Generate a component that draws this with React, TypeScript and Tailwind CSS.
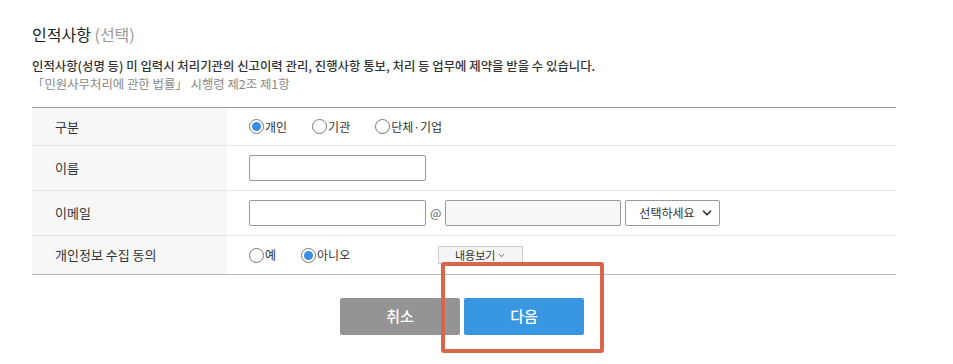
import { ChevronDown } from "lucide-react";

const font = { fontFamily: '"Noto Sans CJK KR", "Noto Sans", sans-serif' };

function Radio({ label, checked }: { label: string; checked?: boolean }) {
  return (
    <label className="flex items-center gap-[1px] text-[12px] text-[#333]">
      <span className="flex h-[15px] w-[15px] items-center justify-center rounded-full border border-[#777] bg-white">
        {checked && <span className="h-[9px] w-[9px] rounded-full bg-[#3a8ee6]" />}
      </span>
      {label}
    </label>
  );
}

function Row({ label, children, last }: { label: string; children: React.ReactNode; last?: boolean }) {
  return (
    <div className={`flex ${last ? "" : "border-b border-[#e5e5e5]"}`}>
      <div className="flex w-[195px] items-center bg-[#f7f7f7] pl-[23px] text-[13px] text-[#333]">{label}</div>
      <div className="flex flex-1 items-center pl-[22px]">{children}</div>
    </div>
  );
}

export default function App() {
  return (
    <div className="relative h-[364px] w-[953px] bg-white" style={font}>
      <div className="px-[32px] pt-[22px]">
        <h2 className="text-[16px] leading-[24px] text-[#222]">
          인적사항 <span className="text-[#999]">(선택)</span>
        </h2>
        <p className="mt-[11px] text-[12.4px] font-medium leading-[18px] text-[#333]">
          인적사항(성명 등) 미 입력시 처리기관의 신고이력 관리, 진행사항 통보, 처리 등 업무에 제약을 받을 수 있습니다.
        </p>
        <p className="text-[12.4px] leading-[18px] text-[#888]">
          「민원사무처리에 관한 법률」 시행령 제2조 제1항
        </p>

        <div className="mt-[14px] w-[864px] border-y border-t-[#999] border-b-[#bbb]">
          <Row label="구분">
            <div className="flex h-[37px] items-center gap-[25px]">
              <Radio label="개인" checked />
              <Radio label="기관" />
              <Radio label="단체·기업" />
            </div>
          </Row>
          <Row label="이름">
            <div className="flex h-[44px] items-center">
              <input className="h-[26px] w-[177px] rounded-[2px] border border-[#999] bg-white outline-none" />
            </div>
          </Row>
          <Row label="이메일">
            <div className="flex h-[44px] items-center">
              <input className="h-[26px] w-[177px] rounded-[2px] border border-[#999] bg-white outline-none" />
              <span className="mx-[4px] text-[12px] text-[#666]">@</span>
              <input className="h-[26px] w-[176px] rounded-[2px] border border-[#999] bg-[#f7f7f7] outline-none" />
              <div className="ml-[4px] flex h-[26px] w-[95px] items-center justify-between rounded-[2px] border border-[#999] pl-[13px] pr-[5px] text-[12px] text-[#333]">
                선택하세요
                <ChevronDown size={14} strokeWidth={3} className="text-[#333]" />
              </div>
            </div>
          </Row>
          <Row label="개인정보 수집 동의" last>
            <div className="flex h-[38px] items-center">
              <Radio label="예" />
              <span className="ml-[25px]"><Radio label="아니오" checked /></span>
              <div className="ml-[88px] mt-[10px] flex h-[18px] w-[85px] items-center justify-center gap-[2px] self-start border border-[#ccc] bg-[#f5f5f5] text-[11px] text-[#333]">
                내용보기
                <ChevronDown size={9} strokeWidth={2} />
              </div>
            </div>
          </Row>
        </div>

        <div className="ml-[308px] mt-[23px] flex gap-[4px]">
          <button className="h-[37px] w-[120px] rounded-[2px] bg-[#949494] text-[15px] font-medium text-white">취소</button>
          <button className="h-[37px] w-[120px] rounded-[2px] bg-[#3897e0] text-[15px] font-medium text-white">다음</button>
        </div>
      </div>

      <div className="pointer-events-none absolute left-[441px] top-[262px] h-[91px] w-[163px] rounded-[3px] border-[4px] border-[#d9654a]" />
    </div>
  );
}
